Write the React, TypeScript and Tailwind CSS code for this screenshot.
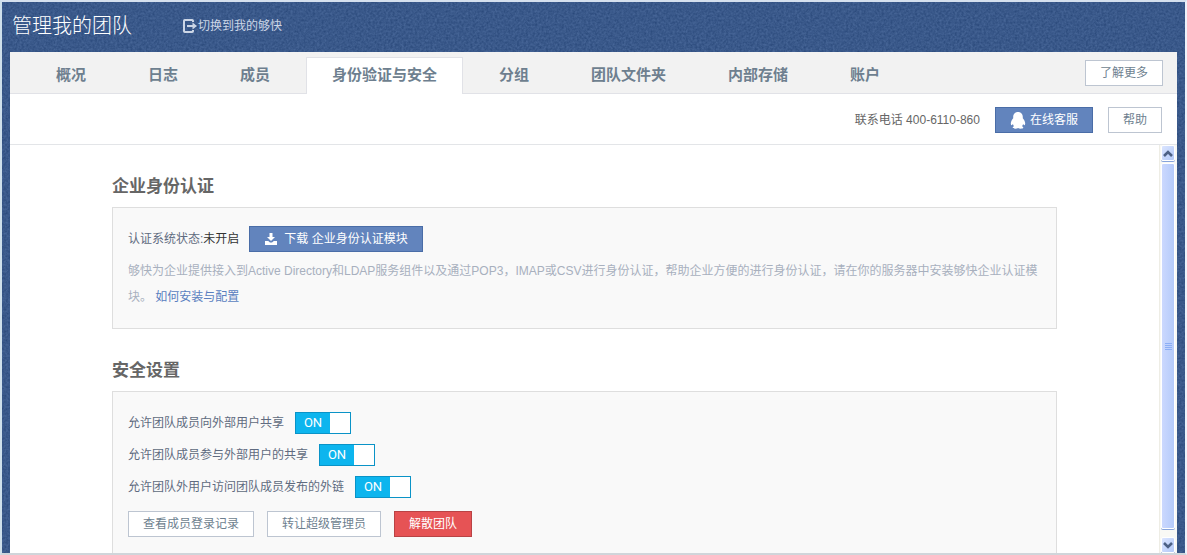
import type { ReactNode } from "react";
import { clsx } from "clsx";

const tabs = ["概况", "日志", "成员", "身份验证与安全", "分组", "团队文件夹", "内部存储", "账户"];
const activeTab = "身份验证与安全";

const switches = [
  { id: "share-out", label: "允许团队成员向外部用户共享" },
  { id: "share-in", label: "允许团队成员参与外部用户的共享" },
  { id: "links", label: "允许团队外用户访问团队成员发布的外链" },
];

type Variant = "plain" | "primary" | "danger";

function Button({ variant = "plain", children }: { variant?: Variant; children: ReactNode }) {
  return (
    <button
      type="button"
      className={clsx(
        "flex h-[26px] shrink-0 items-center border px-[14px] whitespace-nowrap",
        variant === "plain" && "border-[#bdc5d1] bg-white text-[#6e7f8f]",
        variant === "primary" && "border-[#4a6da7] bg-[#6284bd] text-white",
        variant === "danger" && "border-[#b94345] bg-[#e65355] text-white",
      )}
    >
      {children}
    </button>
  );
}

function Texture() {
  return (
    <svg className="pointer-events-none absolute inset-0 h-full w-full opacity-30" aria-hidden="true">
      <filter id="grain" colorInterpolationFilters="sRGB">
        <feTurbulence type="fractalNoise" baseFrequency="0.45" numOctaves="2" />
        <feColorMatrix values="0.5 0 0 0 -0.03  0.5 0 0 0 0.09  0.5 0 0 0 0.28  0 0 0 0 1" />
      </filter>
      <rect width="100%" height="100%" filter="url(#grain)" />
    </svg>
  );
}

function ExitIcon() {
  return (
    <svg width="14" height="14" viewBox="0 0 14 14" fill="none" aria-hidden="true">
      <path d="M10 3V1.8Q10 1 9.2 1H1.8Q1 1 1 1.8v10.4q0 .8.8.8h7.4q.8 0 .8-.8V11" stroke="#ccd6e6" strokeWidth="2" />
      <path d="M4 6h5.5V3.5L14 7l-4.500 3.500V8H4z" fill="#ccd6e6" />
    </svg>
  );
}

function PenguinIcon() {
  return (
    <svg width="16" height="18" viewBox="0 0 16 18" fill="white" aria-hidden="true">
      <path d="M8 1c-3 0-4.800 2.200-4.800 5v1.200C2.200 8.500.8 10.300.8 12.300c0 1.200.4 2 .9 1.900.4-.1.8-.6 1.200-1.100.2.8.6 1.500 1.200 2.100-.9.3-1.400.8-1.400 1.300 0 .8 1.100 1.200 2.600 1.200 1.100 0 2.100-.3 2.700-.8.6.5 1.600.8 2.700.8 1.500 0 2.600-.4 2.600-1.200 0-.5-.5-1-1.400-1.300.6-.6 1-1.300 1.200-2.100.4.5.8 1 1.200 1.100.5.1.9-.7.9-1.900 0-2-1.400-3.800-2.400-5.100V6c0-2.800-1.800-5-4.800-5z" />
    </svg>
  );
}

function DownloadIcon() {
  return (
    <svg width="12" height="12" viewBox="0 0 12 12" fill="white" aria-hidden="true">
      <path d="M4.500 0h3v4H10L6 8 2 4h2.500z" />
      <path d="M0 8h3.200L5 9.600h2L8.800 8H12v4H0z" />
    </svg>
  );
}

function ScrollArrow({ down }: { down?: boolean }) {
  return (
    <div className="mx-px flex h-4 shrink-0 items-center justify-center rounded-xs border border-white bg-linear-to-br from-[#dbe5ff] to-[#b3c9f8] shadow-[0_1px_0_#87a4db]">
      <svg width="10" height="7" viewBox="0 0 10 7" className="shrink-0" fill="none" stroke="#4d6185" strokeWidth="2.600" aria-hidden="true">
        <path d={down ? "M1 1 5 5 9 1" : "M1 6 5 2 9 6"} />
      </svg>
    </div>
  );
}

function ScrollRail() {
  return (
    <div className="flex w-[18px] shrink-0 flex-col border-l border-[#eeede5] bg-[#f9f9f5] pr-px" aria-hidden="true">
      <ScrollArrow />
      <div className="mx-px mt-[2px] mb-2 flex flex-1 items-center justify-center rounded-xs border border-white bg-linear-to-r from-[#cbd8fe] to-[#b5cbfa] shadow-[0_1px_0_#87a4db]">
        <div className="flex flex-col gap-px">
          {[0, 1, 2, 3].map((line) => (
            <div key={line} className="h-px w-[7px] bg-[#8caef5]" />
          ))}
        </div>
      </div>
      <ScrollArrow down />
    </div>
  );
}

function Switch({ id, label }: { id: string; label: string }) {
  return (
    <div className="flex h-[22px] items-center gap-[11px]">
      <label htmlFor={id}>{label}</label>
      <span className="relative flex h-[22px] w-14 border border-[#0a93c7] bg-white">
        <input id={id} type="checkbox" role="switch" defaultChecked className="absolute inset-0 cursor-pointer appearance-none" />
        <span className="pointer-events-none flex w-[34px] items-center justify-center bg-[#0db5ee] font-['Roboto',sans-serif] text-[13px] leading-5 text-white">
          ON
        </span>
      </span>
    </div>
  );
}

function Section({ title, children }: { title: string; children: ReactNode }) {
  return (
    <section className="pt-7">
      <h2 className="mb-[6px] text-[17px] leading-7 font-bold text-[#666]">{title}</h2>
      <div className="border border-[#dedede] bg-[#f9f9f9] px-[15px] py-[18px] text-[#5f6b80]">{children}</div>
    </section>
  );
}

export default function App() {
  return (
    <div className="relative flex h-screen flex-col overflow-hidden border-2 border-t-[#d5e0ee] border-r-[#edf2fa] border-b-[#d0d5da] border-l-[#cfe0eb] bg-[#3b5a8c] font-['Liberation_Sans','Noto_Sans_CJK_SC',sans-serif] text-xs text-[#666]">
      <Texture />
      <header className="relative flex h-[50px] shrink-0 items-center gap-[51px] px-[10px] pb-[2px]">
        <h1 className="text-xl leading-6 font-light text-white">管理我的团队</h1>
        <a href="#home" className="flex items-center gap-px text-[#ccd6e6]">
          <ExitIcon />
          切换到我的够快
        </a>
      </header>
      <main className="relative mx-2 flex min-h-0 flex-1 flex-col bg-white">
        <div className="flex h-[42px] shrink-0 justify-between bg-[#f2f2f2] pr-[14px] pl-5 shadow-[inset_0_-1px_0_#e1e2e7]">
          <nav className="flex items-end gap-[10px] text-[15px] leading-5 font-bold text-[#6e7f8f]">
            {tabs.map((tab) => (
              <a
                key={tab}
                href={`#${tab}`}
                aria-current={tab === activeTab ? "page" : undefined}
                className={clsx(
                  "flex h-[37px] items-center border border-b-0 px-[25px] pb-[2px] whitespace-nowrap",
                  tab === activeTab ? "border-[#e1e2e7] bg-white" : "border-transparent",
                )}
              >
                {tab}
              </a>
            ))}
          </nav>
          <div className="flex items-center">
            <Button>了解更多</Button>
          </div>
        </div>
        <div className="flex h-[51px] shrink-0 items-center justify-end gap-[15px] border-b border-[#e3e5e8] pt-[2px] pr-[15px]">
          <p>联系电话 400-6110-860</p>
          <Button variant="primary">
            <span className="mr-1"><PenguinIcon /></span>
            在线客服
          </Button>
          <Button>帮助</Button>
        </div>
        <div className="flex min-h-0 flex-1">
          <div className="min-w-0 flex-1 overflow-hidden">
            <div className="mx-auto w-full max-w-[945px]">
              <Section title="企业身份认证">
                <div className="flex items-center gap-[10px]">
                  <p>
                    认证系统状态:<span className="text-[#333]">未开启</span>
                  </p>
                  <Button variant="primary">
                    <span className="mr-[7px] ml-px"><DownloadIcon /></span>
                    下载 企业身份认证模块
                  </Button>
                </div>
                <p className="mt-[6px] leading-[26px] text-[#a8b0be]">
                  够快为企业提供接入到Active Directory和LDAP服务组件以及通过POP3，IMAP或CSV进行身份认证，帮助企业方便的进行身份认证，请在你的服务器中安装够快企业认证模块。{" "}
                  <a href="#guide" className="text-[#5a7fbf]">如何安装与配置</a>
                </p>
              </Section>
              <Section title="安全设置">
                <div className="flex flex-col gap-[10px] pt-[2px]">
                  {switches.map((item) => (
                    <Switch key={item.id} {...item} />
                  ))}
                </div>
                <div className="mt-[13px] flex gap-[13px]">
                  <Button>查看成员登录记录</Button>
                  <Button>转让超级管理员</Button>
                  <Button variant="danger">解散团队</Button>
                </div>
              </Section>
            </div>
          </div>
          <ScrollRail />
        </div>
      </main>
    </div>
  );
}
